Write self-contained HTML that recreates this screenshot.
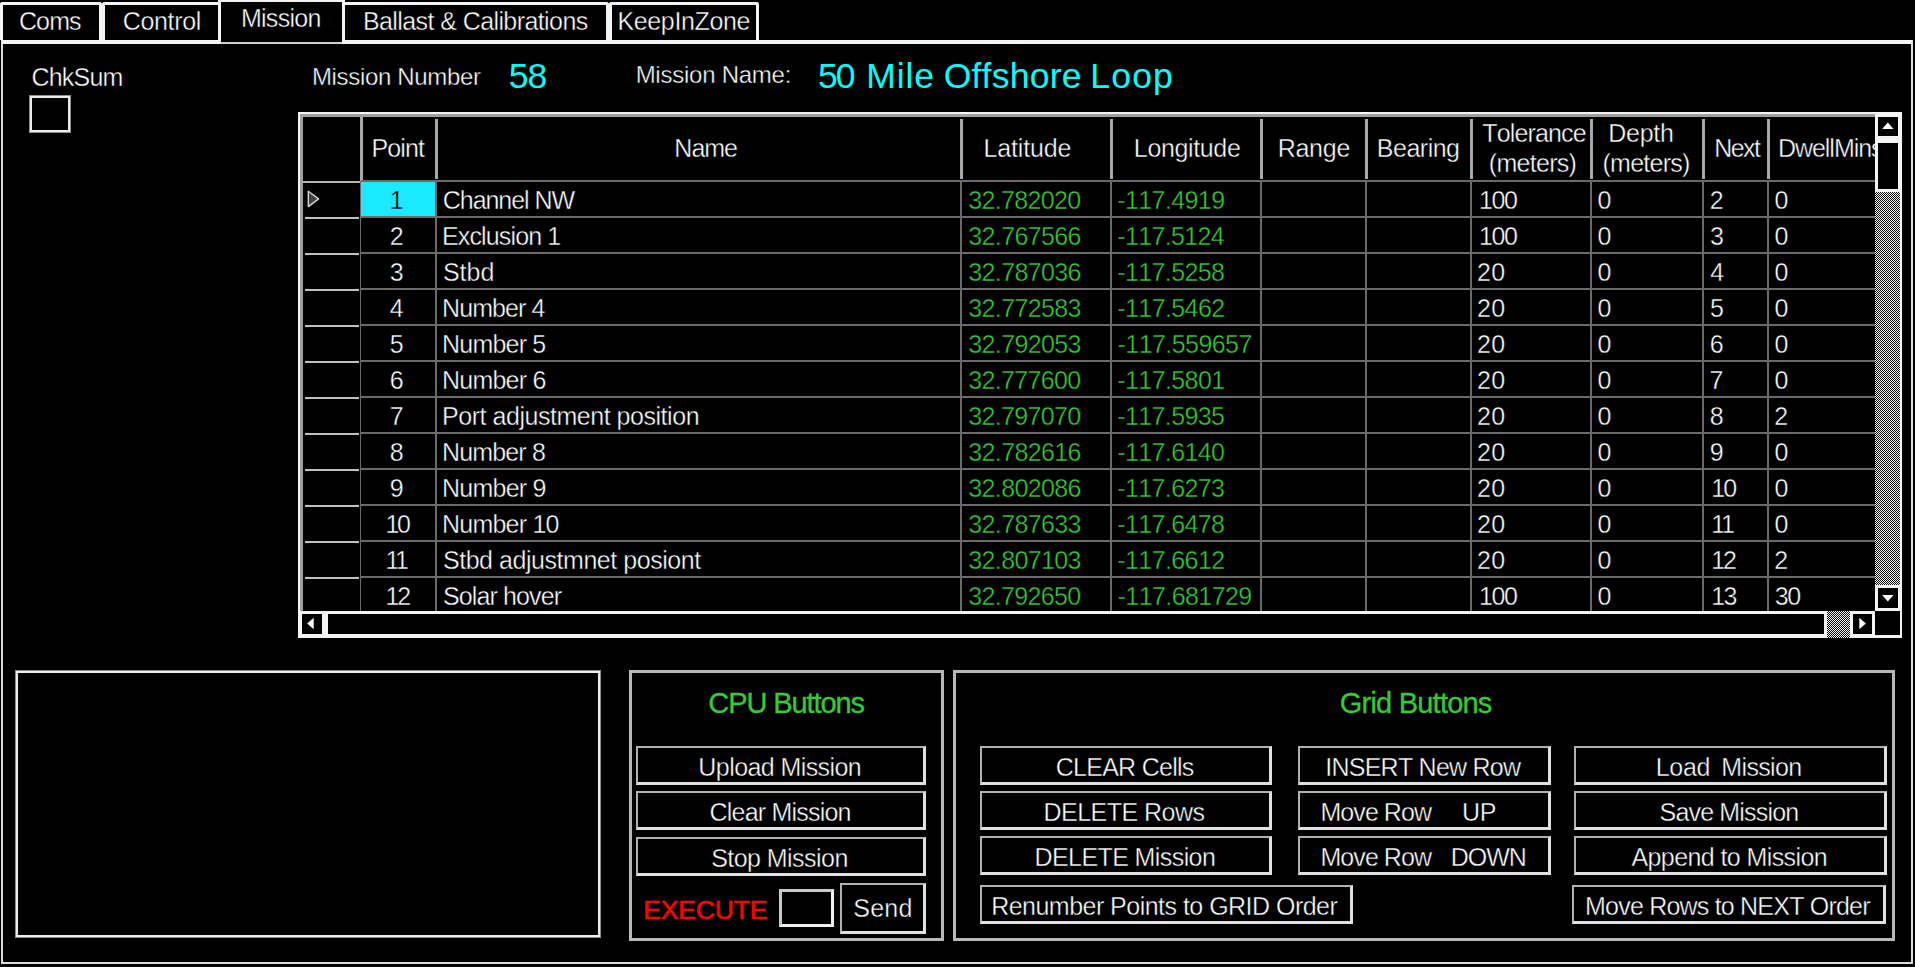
<!DOCTYPE html>
<html lang="en"><head><meta charset="utf-8"><title>Mission</title>
<style>
html,body{margin:0;padding:0;background:#000;}
body{width:1915px;height:967px;overflow:hidden;position:relative;font-family:"Liberation Sans",Arial,sans-serif;color:#fff;font-kerning:none;font-variant-ligatures:none;}
body div,body svg{position:absolute;}
.t{line-height:1;white-space:nowrap;-webkit-text-stroke:0.4px #000;}
</style></head><body>
<div style="left:1px;top:40px;width:1912px;height:924px;border:2px solid #dcdcdc;border-top:4px solid #f4f4f4;box-sizing:border-box;"></div>
<div style="left:0px;top:2px;width:102px;height:38px;border:solid #f4f4f4;border-width:3px 3px 0 3px;border-radius:3px 3px 0 0;box-sizing:border-box;background:#000;"></div>
<div class="t" style="left:18.93px;top:9px;font-size:25px;letter-spacing:-0.870px;">Coms</div>
<div style="left:102px;top:2px;width:119px;height:38px;border:solid #f4f4f4;border-width:3px 3px 0 3px;border-radius:3px 3px 0 0;box-sizing:border-box;background:#000;"></div>
<div class="t" style="left:122.83px;top:9px;font-size:25px;letter-spacing:-0.358px;">Control</div>
<div style="left:342px;top:2px;width:267px;height:38px;border:solid #f4f4f4;border-width:3px 3px 0 3px;border-radius:3px 3px 0 0;box-sizing:border-box;background:#000;"></div>
<div class="t" style="left:362.95px;top:9px;font-size:25px;letter-spacing:-0.588px;">Ballast &amp; Calibrations</div>
<div style="left:609px;top:2px;width:150px;height:38px;border:solid #f4f4f4;border-width:3px 3px 0 3px;border-radius:3px 3px 0 0;box-sizing:border-box;background:#000;"></div>
<div class="t" style="left:617.45px;top:9px;font-size:25px;letter-spacing:-0.362px;">KeepInZone</div>
<div style="left:218px;top:-1px;width:127px;height:43px;border:3px solid #f4f4f4;border-bottom:none;box-sizing:border-box;background:#000;"></div>
<div class="t" style="left:240.95px;top:6px;font-size:25px;letter-spacing:-0.728px;">Mission</div>
<div style="left:221px;top:42px;width:121px;height:2px;background:#d0d0d0"></div>
<div class="t" style="left:31.53px;top:65px;font-size:25px;letter-spacing:-0.809px;">ChkSum</div>
<div style="left:29px;top:95px;width:42px;height:38px;border:1px solid #8c8c8c;box-sizing:border-box;"></div>
<div style="left:30px;top:96px;width:40px;height:36px;border:2px solid #ececec;box-sizing:border-box;"></div>
<div class="t" style="left:311.93px;top:65px;font-size:24px;letter-spacing:-0.339px;">Mission Number</div>
<div class="t" style="left:508.78px;top:59px;font-size:35.5px;color:#00ffff;letter-spacing:-1.023px;-webkit-text-stroke:0;">58</div>
<div class="t" style="left:635.63px;top:63px;font-size:24px;letter-spacing:-0.246px;">Mission Name:</div>
<div class="t" style="left:817.98px;top:59px;font-size:35.5px;color:#00ffff;white-space:pre;-webkit-text-stroke:0;"><span style="letter-spacing:-2.079px">50</span><span style="letter-spacing:3.117px"> </span><span style="letter-spacing:0.833px">Mile</span><span style="letter-spacing:-0.955px"> </span><span style="letter-spacing:0.245px">Offshore</span><span style="letter-spacing:-1.298px"> </span><span style="letter-spacing:1.176px">Loop</span></div>
<div style="left:298px;top:112px;width:1604px;height:2px;background:#f4f4f4"></div>
<div style="left:298px;top:112px;width:2px;height:526px;background:#f4f4f4"></div>
<div style="left:300px;top:114px;width:1575px;height:3px;background:#a0a0a0"></div>
<div style="left:300px;top:114px;width:3px;height:497px;background:#a0a0a0"></div>
<div style="left:303px;top:117px;width:1572px;height:494px;overflow:hidden">
<div style="left:57px;top:0px;width:3px;height:64px;background:#a8a8a8"></div>
<div style="left:57px;top:64px;width:1px;height:430px;background:#6a6a6a"></div>
<div style="left:132px;top:2px;width:3px;height:60px;background:#a8a8a8"></div>
<div style="left:132px;top:64px;width:2px;height:430px;background:#6a6a6a"></div>
<div style="left:657px;top:2px;width:3px;height:60px;background:#a8a8a8"></div>
<div style="left:657px;top:64px;width:2px;height:430px;background:#6a6a6a"></div>
<div style="left:807px;top:2px;width:3px;height:60px;background:#a8a8a8"></div>
<div style="left:807px;top:64px;width:2px;height:430px;background:#6a6a6a"></div>
<div style="left:957px;top:2px;width:3px;height:60px;background:#a8a8a8"></div>
<div style="left:957px;top:64px;width:2px;height:430px;background:#6a6a6a"></div>
<div style="left:1062px;top:2px;width:3px;height:60px;background:#a8a8a8"></div>
<div style="left:1062px;top:64px;width:2px;height:430px;background:#6a6a6a"></div>
<div style="left:1167px;top:2px;width:3px;height:60px;background:#a8a8a8"></div>
<div style="left:1167px;top:64px;width:2px;height:430px;background:#6a6a6a"></div>
<div style="left:1287px;top:2px;width:3px;height:60px;background:#a8a8a8"></div>
<div style="left:1287px;top:64px;width:2px;height:430px;background:#6a6a6a"></div>
<div style="left:1399px;top:2px;width:3px;height:60px;background:#a8a8a8"></div>
<div style="left:1399px;top:64px;width:2px;height:430px;background:#6a6a6a"></div>
<div style="left:1464px;top:2px;width:3px;height:60px;background:#a8a8a8"></div>
<div style="left:1464px;top:64px;width:2px;height:430px;background:#6a6a6a"></div>
<div style="left:58px;top:63px;width:1514px;height:2px;background:#6a6a6a"></div>
<div style="left:0px;top:64px;width:57px;height:2px;background:#b4b4b4"></div>
<div class="t" style="left:68.55px;top:19px;font-size:25px;letter-spacing:-0.887px;">Point</div>
<div class="t" style="left:371.35px;top:19px;font-size:25px;letter-spacing:-1.008px;">Name</div>
<div class="t" style="left:680.45px;top:19px;font-size:25px;letter-spacing:-0.143px;">Latitude</div>
<div class="t" style="left:830.85px;top:19px;font-size:25px;letter-spacing:-0.358px;">Longitude</div>
<div class="t" style="left:974.65px;top:19px;font-size:25px;letter-spacing:-0.252px;">Range</div>
<div class="t" style="left:1073.85px;top:19px;font-size:25px;letter-spacing:-0.501px;">Bearing</div>
<div class="t" style="left:1179.34px;top:4px;font-size:25px;letter-spacing:-0.862px;">Tolerance</div>
<div class="t" style="left:1185.85px;top:34px;font-size:25px;letter-spacing:-0.708px;">(meters)</div>
<div class="t" style="left:1305.15px;top:4px;font-size:25px;letter-spacing:-0.234px;">Depth</div>
<div class="t" style="left:1299.45px;top:34px;font-size:25px;letter-spacing:-0.722px;">(meters)</div>
<div class="t" style="left:1411.25px;top:19px;font-size:25px;letter-spacing:-1.557px;">Next</div>
<div class="t" style="left:1474.95px;top:19px;font-size:25px;letter-spacing:-1.033px;">DwellMins</div>
<div style="left:58px;top:65px;width:74px;height:34px;background:#1aeaff"></div>
<div style="left:58px;top:99px;width:1514px;height:2px;background:#6a6a6a"></div>
<div style="left:2px;top:100px;width:54px;height:2px;background:#c0c0c0"></div>
<div class="t" style="left:58.00px;top:71px;font-size:25px;color:#000;width:71.4px;text-align:center;-webkit-text-stroke:0.3px #1aeaff;">1</div>
<div class="t" style="left:139.83px;top:71px;font-size:25px;letter-spacing:-1.063px;">Channel NW</div>
<div class="t" style="left:665.35px;top:71px;font-size:25px;color:#32cd32;letter-spacing:-0.668px;">32.782020</div>
<div class="t" style="left:814.29px;top:71px;font-size:25px;color:#32cd32;letter-spacing:-0.600px;">-117.4919</div>
<div class="t" style="left:1176.00px;top:71px;font-size:25px;letter-spacing:-1.465px;">100</div>
<div class="t" style="left:1294.62px;top:71px;font-size:25px;">0</div>
<div class="t" style="left:1406.64px;top:71px;font-size:25px;">2</div>
<div class="t" style="left:1471.52px;top:71px;font-size:25px;">0</div>
<div style="left:58px;top:135px;width:1514px;height:2px;background:#6a6a6a"></div>
<div style="left:2px;top:136px;width:54px;height:2px;background:#c0c0c0"></div>
<div class="t" style="left:58.00px;top:107px;font-size:25px;width:71.4px;text-align:center;">2</div>
<div class="t" style="left:139.05px;top:107px;font-size:25px;letter-spacing:-0.867px;">Exclusion 1</div>
<div class="t" style="left:665.35px;top:107px;font-size:25px;color:#32cd32;letter-spacing:-0.653px;">32.767566</div>
<div class="t" style="left:814.29px;top:107px;font-size:25px;color:#32cd32;letter-spacing:-0.657px;">-117.5124</div>
<div class="t" style="left:1176.00px;top:107px;font-size:25px;letter-spacing:-1.465px;">100</div>
<div class="t" style="left:1294.62px;top:107px;font-size:25px;">0</div>
<div class="t" style="left:1406.95px;top:107px;font-size:25px;">3</div>
<div class="t" style="left:1471.52px;top:107px;font-size:25px;">0</div>
<div style="left:58px;top:171px;width:1514px;height:2px;background:#6a6a6a"></div>
<div style="left:2px;top:172px;width:54px;height:2px;background:#c0c0c0"></div>
<div class="t" style="left:58.00px;top:143px;font-size:25px;width:71.4px;text-align:center;">3</div>
<div class="t" style="left:139.96px;top:143px;font-size:25px;letter-spacing:-0.027px;">Stbd</div>
<div class="t" style="left:665.35px;top:143px;font-size:25px;color:#32cd32;letter-spacing:-0.653px;">32.787036</div>
<div class="t" style="left:814.29px;top:143px;font-size:25px;color:#32cd32;letter-spacing:-0.613px;">-117.5258</div>
<div class="t" style="left:1174.04px;top:143px;font-size:25px;letter-spacing:0.326px;">20</div>
<div class="t" style="left:1294.62px;top:143px;font-size:25px;">0</div>
<div class="t" style="left:1407.33px;top:143px;font-size:25px;">4</div>
<div class="t" style="left:1471.52px;top:143px;font-size:25px;">0</div>
<div style="left:58px;top:207px;width:1514px;height:2px;background:#6a6a6a"></div>
<div style="left:2px;top:208px;width:54px;height:2px;background:#c0c0c0"></div>
<div class="t" style="left:58.00px;top:179px;font-size:25px;width:71.4px;text-align:center;">4</div>
<div class="t" style="left:139.05px;top:179px;font-size:25px;letter-spacing:-0.912px;">Number 4</div>
<div class="t" style="left:665.35px;top:179px;font-size:25px;color:#32cd32;letter-spacing:-0.653px;">32.772583</div>
<div class="t" style="left:814.29px;top:179px;font-size:25px;color:#32cd32;letter-spacing:-0.591px;">-117.5462</div>
<div class="t" style="left:1174.04px;top:179px;font-size:25px;letter-spacing:0.326px;">20</div>
<div class="t" style="left:1294.62px;top:179px;font-size:25px;">0</div>
<div class="t" style="left:1406.90px;top:179px;font-size:25px;">5</div>
<div class="t" style="left:1471.52px;top:179px;font-size:25px;">0</div>
<div style="left:58px;top:243px;width:1514px;height:2px;background:#6a6a6a"></div>
<div style="left:2px;top:244px;width:54px;height:2px;background:#c0c0c0"></div>
<div class="t" style="left:58.00px;top:215px;font-size:25px;width:71.4px;text-align:center;">5</div>
<div class="t" style="left:139.05px;top:215px;font-size:25px;letter-spacing:-0.795px;">Number 5</div>
<div class="t" style="left:665.35px;top:215px;font-size:25px;color:#32cd32;letter-spacing:-0.653px;">32.792053</div>
<div class="t" style="left:814.59px;top:215px;font-size:25px;color:#32cd32;letter-spacing:-0.564px;">-117.559657</div>
<div class="t" style="left:1174.04px;top:215px;font-size:25px;letter-spacing:0.326px;">20</div>
<div class="t" style="left:1294.62px;top:215px;font-size:25px;">0</div>
<div class="t" style="left:1406.63px;top:215px;font-size:25px;">6</div>
<div class="t" style="left:1471.52px;top:215px;font-size:25px;">0</div>
<div style="left:58px;top:279px;width:1514px;height:2px;background:#6a6a6a"></div>
<div style="left:2px;top:280px;width:54px;height:2px;background:#c0c0c0"></div>
<div class="t" style="left:58.00px;top:251px;font-size:25px;width:71.4px;text-align:center;">6</div>
<div class="t" style="left:139.05px;top:251px;font-size:25px;letter-spacing:-0.788px;">Number 6</div>
<div class="t" style="left:665.35px;top:251px;font-size:25px;color:#32cd32;letter-spacing:-0.668px;">32.777600</div>
<div class="t" style="left:814.29px;top:251px;font-size:25px;color:#32cd32;letter-spacing:-0.596px;">-117.5801</div>
<div class="t" style="left:1174.04px;top:251px;font-size:25px;letter-spacing:0.326px;">20</div>
<div class="t" style="left:1294.62px;top:251px;font-size:25px;">0</div>
<div class="t" style="left:1406.62px;top:251px;font-size:25px;">7</div>
<div class="t" style="left:1471.52px;top:251px;font-size:25px;">0</div>
<div style="left:58px;top:315px;width:1514px;height:2px;background:#6a6a6a"></div>
<div style="left:2px;top:316px;width:54px;height:2px;background:#c0c0c0"></div>
<div class="t" style="left:58.00px;top:287px;font-size:25px;width:71.4px;text-align:center;">7</div>
<div class="t" style="left:139.05px;top:287px;font-size:25px;letter-spacing:-0.466px;">Port adjustment position</div>
<div class="t" style="left:665.35px;top:287px;font-size:25px;color:#32cd32;letter-spacing:-0.668px;">32.797070</div>
<div class="t" style="left:814.29px;top:287px;font-size:25px;color:#32cd32;letter-spacing:-0.617px;">-117.5935</div>
<div class="t" style="left:1174.04px;top:287px;font-size:25px;letter-spacing:0.326px;">20</div>
<div class="t" style="left:1294.62px;top:287px;font-size:25px;">0</div>
<div class="t" style="left:1406.81px;top:287px;font-size:25px;">8</div>
<div class="t" style="left:1471.24px;top:287px;font-size:25px;">2</div>
<div style="left:58px;top:351px;width:1514px;height:2px;background:#6a6a6a"></div>
<div style="left:2px;top:352px;width:54px;height:2px;background:#c0c0c0"></div>
<div class="t" style="left:58.00px;top:323px;font-size:25px;width:71.4px;text-align:center;">8</div>
<div class="t" style="left:139.05px;top:323px;font-size:25px;letter-spacing:-0.861px;">Number 8</div>
<div class="t" style="left:665.35px;top:323px;font-size:25px;color:#32cd32;letter-spacing:-0.653px;">32.782616</div>
<div class="t" style="left:814.29px;top:323px;font-size:25px;color:#32cd32;letter-spacing:-0.626px;">-117.6140</div>
<div class="t" style="left:1174.04px;top:323px;font-size:25px;letter-spacing:0.326px;">20</div>
<div class="t" style="left:1294.62px;top:323px;font-size:25px;">0</div>
<div class="t" style="left:1406.73px;top:323px;font-size:25px;">9</div>
<div class="t" style="left:1471.52px;top:323px;font-size:25px;">0</div>
<div style="left:58px;top:387px;width:1514px;height:2px;background:#6a6a6a"></div>
<div style="left:2px;top:388px;width:54px;height:2px;background:#c0c0c0"></div>
<div class="t" style="left:58.00px;top:359px;font-size:25px;width:71.4px;text-align:center;">9</div>
<div class="t" style="left:139.05px;top:359px;font-size:25px;letter-spacing:-0.776px;">Number 9</div>
<div class="t" style="left:665.35px;top:359px;font-size:25px;color:#32cd32;letter-spacing:-0.653px;">32.802086</div>
<div class="t" style="left:814.29px;top:359px;font-size:25px;color:#32cd32;letter-spacing:-0.611px;">-117.6273</div>
<div class="t" style="left:1174.04px;top:359px;font-size:25px;letter-spacing:0.326px;">20</div>
<div class="t" style="left:1294.62px;top:359px;font-size:25px;">0</div>
<div class="t" style="left:1408.20px;top:359px;font-size:25px;letter-spacing:-1.827px;">10</div>
<div class="t" style="left:1471.52px;top:359px;font-size:25px;">0</div>
<div style="left:58px;top:423px;width:1514px;height:2px;background:#6a6a6a"></div>
<div style="left:2px;top:424px;width:54px;height:2px;background:#c0c0c0"></div>
<div class="t" style="left:82.50px;top:395px;font-size:25px;letter-spacing:-2.527px;">10</div>
<div class="t" style="left:139.05px;top:395px;font-size:25px;letter-spacing:-0.780px;">Number 10</div>
<div class="t" style="left:665.35px;top:395px;font-size:25px;color:#32cd32;letter-spacing:-0.653px;">32.787633</div>
<div class="t" style="left:814.29px;top:395px;font-size:25px;color:#32cd32;letter-spacing:-0.613px;">-117.6478</div>
<div class="t" style="left:1174.04px;top:395px;font-size:25px;letter-spacing:0.326px;">20</div>
<div class="t" style="left:1294.62px;top:395px;font-size:25px;">0</div>
<div class="t" style="left:1408.20px;top:395px;font-size:25px;letter-spacing:-4.083px;">11</div>
<div class="t" style="left:1471.52px;top:395px;font-size:25px;">0</div>
<div style="left:58px;top:459px;width:1514px;height:2px;background:#6a6a6a"></div>
<div style="left:2px;top:460px;width:54px;height:2px;background:#c0c0c0"></div>
<div class="t" style="left:82.50px;top:431px;font-size:25px;letter-spacing:-4.283px;">11</div>
<div class="t" style="left:139.96px;top:431px;font-size:25px;letter-spacing:-0.455px;">Stbd adjustmnet posiont</div>
<div class="t" style="left:665.35px;top:431px;font-size:25px;color:#32cd32;letter-spacing:-0.653px;">32.807103</div>
<div class="t" style="left:814.29px;top:431px;font-size:25px;color:#32cd32;letter-spacing:-0.591px;">-117.6612</div>
<div class="t" style="left:1174.04px;top:431px;font-size:25px;letter-spacing:0.326px;">20</div>
<div class="t" style="left:1294.62px;top:431px;font-size:25px;">0</div>
<div class="t" style="left:1408.20px;top:431px;font-size:25px;letter-spacing:-2.146px;">12</div>
<div class="t" style="left:1471.24px;top:431px;font-size:25px;">2</div>
<div style="left:58px;top:495px;width:1514px;height:2px;background:#6a6a6a"></div>
<div style="left:2px;top:496px;width:54px;height:2px;background:#c0c0c0"></div>
<div class="t" style="left:82.50px;top:467px;font-size:25px;letter-spacing:-2.246px;">12</div>
<div class="t" style="left:139.96px;top:467px;font-size:25px;letter-spacing:-0.879px;">Solar hover</div>
<div class="t" style="left:665.35px;top:467px;font-size:25px;color:#32cd32;letter-spacing:-0.668px;">32.792650</div>
<div class="t" style="left:814.59px;top:467px;font-size:25px;color:#32cd32;letter-spacing:-0.571px;">-117.681729</div>
<div class="t" style="left:1176.00px;top:467px;font-size:25px;letter-spacing:-1.465px;">100</div>
<div class="t" style="left:1294.62px;top:467px;font-size:25px;">0</div>
<div class="t" style="left:1408.20px;top:467px;font-size:25px;letter-spacing:-1.705px;">13</div>
<div class="t" style="left:1471.75px;top:467px;font-size:25px;letter-spacing:-1.479px;">30</div>
</div>
<svg style="left:305px;top:188px" width="18" height="22" viewBox="0 0 18 22"><path d="M3.3 3.2 L13.6 10.9 L3.3 18.6 Z" fill="#444" stroke="#d4d4d4" stroke-width="1.4" stroke-linejoin="round"/></svg>
<div style="left:1875px;top:117px;width:27px;height:494px;background:repeating-conic-gradient(#fff 0 25%,#000 0 50%) 0 0/2px 2px;"></div>
<div style="left:1875px;top:112px;width:27px;height:27px;box-sizing:border-box;background:#000;border:solid #f4f4f4;border-width:5px 4px 3px 3px;"></div>
<svg style="left:0;top:0" width="1915" height="967"><polygon points="1882.1,129.0 1893.5,129.0 1887.8,122.5" fill="#fff"/></svg>
<div style="left:1875px;top:139px;width:27px;height:53px;box-sizing:border-box;background:#000;border:solid #f4f4f4;border-width:4px 4px 3px 3px;"></div>
<div style="left:1875px;top:585px;width:27px;height:26px;box-sizing:border-box;background:#000;border:solid #f4f4f4;border-width:3px 4px 3px 3px;"></div>
<svg style="left:0;top:0" width="1915" height="967"><polygon points="1882.1,595.0999999999999 1893.5,595.0999999999999 1887.8,601.5999999999999" fill="#fff"/></svg>
<div style="left:300px;top:611px;width:1575px;height:27px;background:repeating-conic-gradient(#fff 0 25%,#000 0 50%) 0 0/2px 2px;"></div>
<div style="left:298px;top:611px;width:27px;height:27px;box-sizing:border-box;background:#000;border:solid #f4f4f4;border-width:3px 3px 4px 4px;"></div>
<svg style="left:0;top:0" width="1915" height="967"><polygon points="313.7,617.8 313.7,629.2 307.2,623.5" fill="#fff"/></svg>
<div style="left:325px;top:611px;width:1502px;height:27px;box-sizing:border-box;background:#000;border:solid #f4f4f4;border-width:3px 3px 4px 3px;"></div>
<div style="left:1850px;top:611px;width:25px;height:27px;box-sizing:border-box;background:#000;border:solid #f4f4f4;border-width:3px 3px 4px 3px;"></div>
<svg style="left:0;top:0" width="1915" height="967"><polygon points="1859.3,617.8 1859.3,629.2 1865.8,623.5" fill="#fff"/></svg>
<div style="left:1900px;top:139px;width:2px;height:472px;background:#f4f4f4"></div>
<div style="left:1875px;top:611px;width:27px;height:27px;background:#000;box-sizing:border-box;border:solid #f4f4f4;border-width:0 2px 3px 0;"></div>
<div style="left:15px;top:670px;width:586px;height:268px;box-sizing:border-box;border:1px solid #8c8c8c;"></div>
<div style="left:16px;top:671px;width:584px;height:266px;box-sizing:border-box;border:2px solid #ececec;"></div>
<div style="left:629px;top:670px;width:315px;height:271px;border:3px solid #b8b8b8;box-sizing:border-box;"></div>
<div class="t" style="left:708.33px;top:689px;font-size:29px;color:#32cd32;letter-spacing:-1.091px;-webkit-text-stroke:0.3px #32cd32;">CPU Buttons</div>
<div style="left:636px;top:746px;width:290px;height:39px;border-style:solid;border-color:#b0b0b0 #e0e0e0 #e0e0e0 #b0b0b0;border-width:2px 3px 3px 2px;box-sizing:border-box;"></div>
<div class="t" style="left:698.37px;top:755px;font-size:25px;letter-spacing:-0.581px;">Upload Mission</div>
<div style="left:636px;top:791px;width:290px;height:39px;border-style:solid;border-color:#b0b0b0 #e0e0e0 #e0e0e0 #b0b0b0;border-width:2px 3px 3px 2px;box-sizing:border-box;"></div>
<div class="t" style="left:709.53px;top:800px;font-size:25px;letter-spacing:-0.795px;">Clear Mission</div>
<div style="left:636px;top:837px;width:290px;height:39px;border-style:solid;border-color:#b0b0b0 #e0e0e0 #e0e0e0 #b0b0b0;border-width:2px 3px 3px 2px;box-sizing:border-box;"></div>
<div class="t" style="left:711.16px;top:846px;font-size:25px;letter-spacing:-0.541px;">Stop Mission</div>
<div style="left:840px;top:883px;width:86px;height:51px;border-style:solid;border-color:#b0b0b0 #e0e0e0 #e0e0e0 #b0b0b0;border-width:2px 3px 3px 2px;box-sizing:border-box;"></div>
<div class="t" style="left:853.26px;top:896px;font-size:25px;letter-spacing:0.220px;">Send</div>
<div style="left:779px;top:889px;width:55px;height:38px;border-style:solid;border-color:#c8c8c8 #f0f0f0 #f0f0f0 #c8c8c8;border-width:3px;box-sizing:border-box;"></div>
<div class="t" style="left:643.13px;top:897px;font-size:26.5px;color:#ff0000;letter-spacing:-0.142px;-webkit-text-stroke:0.6px #f00;">EXECUTE</div>
<div style="left:953px;top:670px;width:942px;height:271px;border:3px solid #b8b8b8;box-sizing:border-box;"></div>
<div class="t" style="left:1339.84px;top:689px;font-size:29px;color:#32cd32;letter-spacing:-0.789px;-webkit-text-stroke:0.3px #32cd32;">Grid Buttons</div>
<div style="left:980px;top:746px;width:292px;height:39px;border-style:solid;border-color:#b0b0b0 #e0e0e0 #e0e0e0 #b0b0b0;border-width:2px 3px 3px 2px;box-sizing:border-box;"></div>
<div class="t" style="left:1055.73px;top:755px;font-size:25px;letter-spacing:-0.730px;">CLEAR Cells</div>
<div style="left:980px;top:791px;width:292px;height:39px;border-style:solid;border-color:#b0b0b0 #e0e0e0 #e0e0e0 #b0b0b0;border-width:2px 3px 3px 2px;box-sizing:border-box;"></div>
<div class="t" style="left:1043.55px;top:800px;font-size:25px;letter-spacing:-0.536px;">DELETE Rows</div>
<div style="left:980px;top:836px;width:292px;height:39px;border-style:solid;border-color:#b0b0b0 #e0e0e0 #e0e0e0 #b0b0b0;border-width:2px 3px 3px 2px;box-sizing:border-box;"></div>
<div class="t" style="left:1034.55px;top:845px;font-size:25px;letter-spacing:-0.590px;">DELETE Mission</div>
<div style="left:980px;top:885px;width:373px;height:39px;border-style:solid;border-color:#b0b0b0 #e0e0e0 #e0e0e0 #b0b0b0;border-width:2px 3px 3px 2px;box-sizing:border-box;"></div>
<div class="t" style="left:991.15px;top:894px;font-size:25px;letter-spacing:-0.521px;">Renumber Points to GRID Order</div>
<div style="left:1298px;top:746px;width:253px;height:39px;border-style:solid;border-color:#b0b0b0 #e0e0e0 #e0e0e0 #b0b0b0;border-width:2px 3px 3px 2px;box-sizing:border-box;"></div>
<div class="t" style="left:1325.29px;top:755px;font-size:25px;letter-spacing:-0.757px;">INSERT New Row</div>
<div style="left:1298px;top:791px;width:253px;height:39px;border-style:solid;border-color:#b0b0b0 #e0e0e0 #e0e0e0 #b0b0b0;border-width:2px 3px 3px 2px;box-sizing:border-box;"></div>
<div class="t" style="left:1320.45px;top:800px;font-size:25px;white-space:pre;"><span style="letter-spacing:-0.929px">Move Row</span><span style="letter-spacing:0.794px">    </span><span style="letter-spacing:-0.282px">UP</span></div>
<div style="left:1298px;top:836px;width:253px;height:39px;border-style:solid;border-color:#b0b0b0 #e0e0e0 #e0e0e0 #b0b0b0;border-width:2px 3px 3px 2px;box-sizing:border-box;"></div>
<div class="t" style="left:1320.45px;top:845px;font-size:25px;white-space:pre;"><span style="letter-spacing:-0.929px">Move Row</span><span style="letter-spacing:-0.399px">   </span><span style="letter-spacing:-1.054px">DOWN</span></div>
<div style="left:1574px;top:746px;width:313px;height:39px;border-style:solid;border-color:#b0b0b0 #e0e0e0 #e0e0e0 #b0b0b0;border-width:2px 3px 3px 2px;box-sizing:border-box;"></div>
<div class="t" style="left:1655.65px;top:755px;font-size:25px;white-space:pre;"><span style="letter-spacing:-0.284px">Load</span><span style="letter-spacing:-1.335px">  </span><span style="letter-spacing:-0.661px">Mission</span></div>
<div style="left:1574px;top:791px;width:313px;height:39px;border-style:solid;border-color:#b0b0b0 #e0e0e0 #e0e0e0 #b0b0b0;border-width:2px 3px 3px 2px;box-sizing:border-box;"></div>
<div class="t" style="left:1659.56px;top:800px;font-size:25px;letter-spacing:-0.828px;">Save Mission</div>
<div style="left:1574px;top:836px;width:313px;height:39px;border-style:solid;border-color:#b0b0b0 #e0e0e0 #e0e0e0 #b0b0b0;border-width:2px 3px 3px 2px;box-sizing:border-box;"></div>
<div class="t" style="left:1631.45px;top:845px;font-size:25px;letter-spacing:-0.588px;">Append to Mission</div>
<div style="left:1572px;top:885px;width:314px;height:39px;border-style:solid;border-color:#b0b0b0 #e0e0e0 #e0e0e0 #b0b0b0;border-width:2px 3px 3px 2px;box-sizing:border-box;"></div>
<div class="t" style="left:1585.05px;top:894px;font-size:25px;letter-spacing:-0.790px;">Move Rows to NEXT Order</div>
</body></html>
